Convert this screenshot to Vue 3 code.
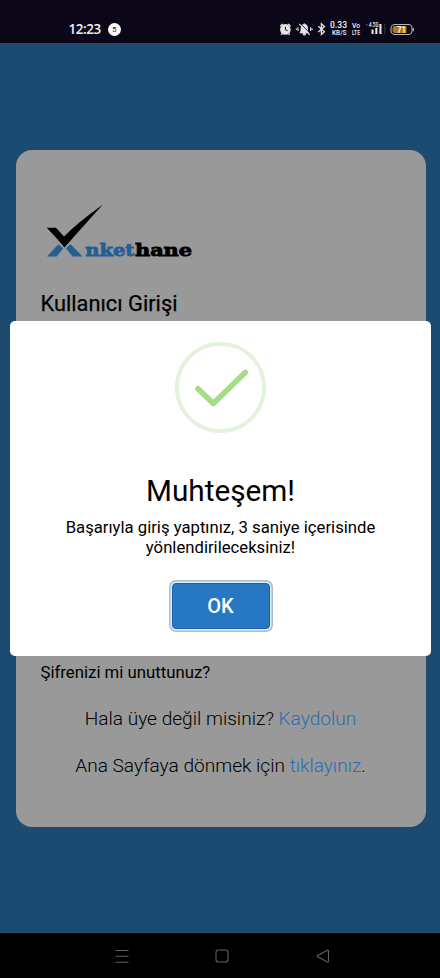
<script setup>
const signalBars = [
  { x: 101.5, y: 15.5, h: 4.5 },
  { x: 105.3, y: 13.8, h: 6.2 },
  { x: 109.4, y: 10, h: 10 },
]
</script>

<template>
  <div class="screen">
    <header class="status">
      <div class="clock">
        <span class="time">12:23</span>
        <span class="count">5</span>
      </div>
      <svg class="indicators" width="145" height="30" viewBox="0 0 145 30">
        <g fill="#e4e3e8">
          <circle cx="15.4" cy="15.4" r="5.3" />
          <path d="M10.2 12.2 12.8 10M18 10 20.6 12.2M12 19.6 11.2 20.8M18.8 19.6 19.6 20.8" stroke="#e4e3e8" stroke-width="1.5" />
          <path d="M15.4 12.7V15.7L17.6 16.7" fill="none" stroke="#0c0718" stroke-width="1" />
          <path d="M29.4 19.2C30.8 17.8 30.5 15.5 30.8 13.6A3.5 3.5 0 0 1 37.8 13.6C38.1 15.5 37.8 17.8 39.2 19.2Z" />
          <path d="M32.8 19.6H35.8A1.5 1.5 0 0 1 32.8 19.6M34.3 9.2V11" stroke="#e4e3e8" stroke-width="0.9" />
          <path d="M30.4 9.6 40.8 20" stroke="#0c0718" stroke-width="0.9" />
          <path d="M29.2 9.9 39.8 20.8M28 13.3V17M40.7 13.3V17M26.4 14.5V16M42.1 14.5V16" fill="none" stroke="#e4e3e8" stroke-width="1.1" />
          <path d="M48.4 12.3 54.4 17.8 51.4 20.5V9.7L54.4 12.4 48.4 17.9" fill="none" stroke="#e4e3e8" stroke-width="1.3" />
        </g>
        <g class="tiny" fill="#e4e3e8">
          <text x="60" y="14.3" font-size="8.4" textLength="17" lengthAdjust="spacingAndGlyphs">0.33</text>
          <text x="62" y="21.3" font-size="7" textLength="14.5" lengthAdjust="spacingAndGlyphs">KB/S</text>
          <text x="82" y="14.2" font-size="7.6" textLength="8" lengthAdjust="spacingAndGlyphs">Vo</text>
          <text x="82" y="21" font-size="6.8" textLength="8" lengthAdjust="spacingAndGlyphs">LTE</text>
          <text x="99" y="13.2" font-size="7" textLength="9.5" lengthAdjust="spacingAndGlyphs">4.5G</text>
        </g>
        <rect v-for="b in signalBars" :key="b.x" :x="b.x" :y="b.y" width="2.1" :height="b.h" fill="#e4e3e8" />
        <rect x="114" y="10" width="1.4" height="10" fill="#2c2837" />
        <rect x="96" y="10" width="1.6" height="1.6" fill="#494654" />
        <rect x="121" y="10.5" width="21" height="10" rx="3.8" fill="#0c0718" stroke="#b5b3b8" stroke-width="1.1" />
        <path d="M125 12H136.5V19H125Q122.6 19 122.6 17V14Q122.6 12 125 12Z" fill="#ad7b1e" />
        <path d="M143.4 14V17.2" stroke="#aaa8ae" stroke-width="1.2" />
        <text class="tiny" x="127" y="18.5" font-size="8.4" fill="#fff" textLength="9" lengthAdjust="spacingAndGlyphs">71</text>
      </svg>
    </header>

    <main class="page">
      <section class="card">
        <svg class="logo" width="170" height="64" viewBox="0 0 170 64">
          <path d="M5.7 24.8H15L23 33.6Q36 20 62 1.5Q46 19 23.4 44.5Q17 36.5 5.7 24.8Z" fill="#000" />
          <path d="M6 53.4 17.2 41.6Q19 42.2 22.2 45.6L15.6 53.4ZM24.8 45.2 29.6 41.2 41.5 53.4H31.5Z" fill="#245f94" />
          <g class="wordmark">
            <text x="44.3" y="52.8" fill="#245f94" stroke="#245f94" textLength="49" lengthAdjust="spacingAndGlyphs">nket</text>
            <text x="94" y="52.8" fill="#000" stroke="#000" textLength="57" lengthAdjust="spacingAndGlyphs">hane</text>
          </g>
        </svg>
        <h1>Kullanıcı Girişi</h1>
        <div class="links">
          <p class="forgot">Şifrenizi mi unuttunuz?</p>
          <p class="line signup">Hala üye değil misiniz? <a>Kaydolun</a></p>
          <p class="line home">Ana Sayfaya dönmek için <a>tıklayınız</a>.</p>
        </div>
      </section>
    </main>

    <div class="modal" role="dialog">
      <svg class="success" width="92" height="92" viewBox="0 0 92 92">
        <circle cx="45.5" cy="46.5" r="43.6" fill="none" stroke="#e4f2db" stroke-width="3.8" />
        <path d="M23 47.7 38.3 62.4 70.2 31.5" fill="none" stroke="#a5dc86" stroke-width="5.6" stroke-linecap="round" stroke-linejoin="round" />
      </svg>
      <h2>Muhteşem!</h2>
      <p class="message">Başarıyla giriş yaptınız, 3 saniye içerisinde<br />yönlendirileceksiniz!</p>
      <button class="ok">OK</button>
    </div>

    <nav class="nav">
      <svg width="16" height="16" viewBox="0 0 16 16"><path d="M1.5 2.5H14.5M1.5 8.3H14.5M1.5 14.2H14.5" /></svg>
      <svg width="16" height="16" viewBox="0 0 16 16"><rect x="2" y="2" width="12" height="12" rx="2.6" /></svg>
      <svg width="16" height="16" viewBox="0 0 16 16"><path d="M13.5 3V13.2Q13.5 14.4 12.4 13.9L3 9Q1.8 8.2 3 7.4L12.4 2.3Q13.5 1.8 13.5 3Z" /></svg>
    </nav>
  </div>
</template>

<style>
body { margin: 0; background: #000; }
</style>

<style scoped>
.screen {
  position: relative;
  width: 440px;
  height: 978px;
  overflow: hidden;
  display: flex;
  flex-direction: column;
  font-family: Roboto, "Liberation Sans", sans-serif;
  color: #000;
}
h1, h2, p { margin: 0; font-weight: 400; white-space: nowrap; }
.status {
  height: 43px;
  flex: none;
  box-sizing: border-box;
  padding: 14px 25px 0 68.5px;
  background: #0c0718;
  display: flex;
  justify-content: space-between;
  align-items: flex-start;
}
.clock { display: flex; align-items: center; gap: 7px; height: 30px; }
.time { font: 600 13.4px/30px "Open Sans", sans-serif; color: #f0eff2; letter-spacing: -0.4px; }
.count {
  width: 13px;
  height: 13px;
  border-radius: 50%;
  background: #fff;
  color: #222;
  font: 8px/13px Roboto, sans-serif;
  text-align: center;
}
.indicators { flex: none; }
.tiny { font-family: Roboto, sans-serif; font-weight: 600; }
.page {
  height: 890px;
  flex: none;
  box-sizing: border-box;
  background: #1c4b72;
  padding: 107px 14.5px 0 15.5px;
}
.card {
  height: 677px;
  box-sizing: border-box;
  border-radius: 16px;
  background: #999;
  padding: 53px 25px 0;
  display: flex;
  flex-direction: column;
}
.logo { display: block; flex: none; }
.wordmark text {
  font-family: "DejaVu Serif", serif;
  font-weight: 700;
  font-size: 16px;
  stroke-width: 0.8px;
}
h1 { margin-top: 22.5px; font-size: 21.8px; line-height: 28px; -webkit-text-stroke: 0.25px #000; }
.links { margin-top: 344.5px; display: flex; flex-direction: column; }
.forgot { font-size: 16.75px; line-height: 20px; }
.line { font-size: 19.1px; line-height: 24px; font-weight: 300; text-align: center; }
.line a { color: #2c6cb6; }
.signup { margin-top: 24.5px; }
.home { margin-top: 23.5px; }
.modal {
  position: absolute;
  left: 10px;
  top: 321px;
  width: 421px;
  height: 335px;
  box-sizing: border-box;
  padding-top: 20px;
  border-radius: 5px;
  background: #fff;
  display: flex;
  flex-direction: column;
  align-items: center;
}
.success { flex: none; }
h2 { margin-top: 39px; font-size: 29.7px; line-height: 38px; }
.message { margin-top: 8px; font-size: 16.7px; line-height: 20px; text-align: center; }
.ok {
  margin: 25px 0 0;
  width: 98px;
  height: 46px;
  padding: 0;
  border: 1px solid #1864a7;
  border-radius: 4px;
  background: #2778c4;
  color: #fff;
  font: 500 20px/44px Roboto, sans-serif;
  box-shadow: 0 0 0 1.5px #d9edf8, 0 0 0 3px #a5bdd0;
}
.nav {
  flex: 1;
  background: #000;
  display: flex;
  justify-content: space-between;
  align-items: center;
  padding: 0 109px 0 113.5px;
}
.nav svg { fill: none; stroke: #626262; stroke-width: 1.1; }
</style>
